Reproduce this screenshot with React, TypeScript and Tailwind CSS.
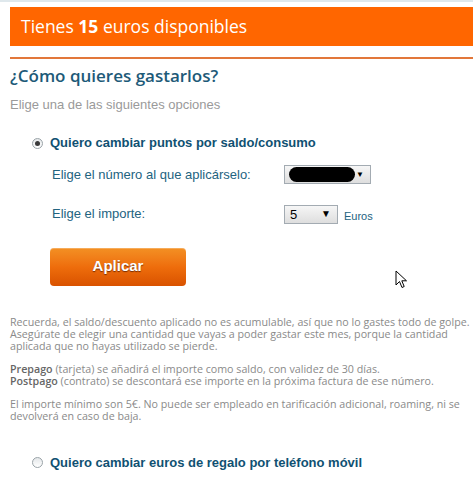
import React from 'react';

function Radio({ checked }: { checked?: boolean }) {
  return (
    <span className="relative inline-flex h-[11px] w-[11px] shrink-0 items-center justify-center rounded-full border border-[#9aa3a8] bg-gradient-to-b from-[#e4e7e9] to-[#ffffff]">
      {checked && <span className="h-[5px] w-[5px] rounded-full bg-[#3a3a3a]" />}
    </span>
  );
}

export default function App() {
  return (
    <div className="min-h-screen w-[473px] overflow-hidden bg-white font-['Liberation_Sans',Arial,sans-serif]">
      <div className="h-[2px] bg-[#dfe8ec]" />

      <div className="pl-[10px]">
        {/* cabecera */}
        <div className="mt-[5px] flex h-[39px] items-center bg-[#ff6600] pl-[11px]">
          <span className="font-['Open_Sans',sans-serif] text-[17.5px] text-white">
            Tienes <b className="font-bold">15</b> euros disponibles
          </span>
        </div>
        <div className="mt-[11px] h-[2px] bg-[#e2773a]" />

        <h1 className="mt-[5px] font-['Open_Sans',sans-serif] text-[17px] font-semibold leading-[24px] text-[#1d5a78]">
          ¿Cómo quieres gastarlos?
        </h1>
        <p className="mt-[9px] text-[13px] leading-[16px] text-[#9a9a9a]">Elige una de las siguientes opciones</p>

        {/* opción 1 */}
        <div className="mt-[22px] flex items-center gap-[7px] pl-[22px]">
          <Radio checked />
          <span className="text-[13px] font-bold leading-[16px] text-[#105172]">Quiero cambiar puntos por saldo/consumo</span>
        </div>

        <div className="mt-[14px] flex items-center pl-[42px]">
          <span className="w-[232px] text-[13px] leading-[16px] text-[#23637f]">Elige el número al que aplicárselo:</span>
          <div className="flex h-[19px] w-[87px] items-center justify-between border border-[#a3abb2] bg-gradient-to-b from-[#f6f6f6] to-[#dedede] pl-[4px] pr-[6px]">
            <span className="h-[15px] w-[66px] rounded-full bg-black" />
            <span className="text-[8px] leading-none text-black">▼</span>
          </div>
        </div>

        <div className="mt-[20px] flex items-center pl-[42px]">
          <span className="w-[232px] text-[13px] leading-[16px] text-[#23637f]">Elige el importe:</span>
          <div className="flex h-[19px] w-[54px] items-center justify-between border border-[#a3abb2] bg-gradient-to-b from-[#f6f6f6] to-[#dedede] pl-[5px] pr-[6px]">
            <span className="text-[13px] text-black">5</span>
            <span className="text-[10px] leading-none text-black">▼</span>
          </div>
          <span className="ml-[6px] mt-[4px] text-[11px] text-[#23637f]">Euros</span>
        </div>

        <div className="relative mt-[23px] pl-[40px]">
          <button className="flex h-[38px] w-[136px] items-center justify-center rounded-[4px] bg-gradient-to-b from-[#f39023] via-[#ee6d0c] to-[#d95200] shadow-[inset_0_1px_0_rgba(255,255,255,0.25)]">
            <span className="text-[15px] font-bold text-white [text-shadow:0_1px_1px_rgba(90,30,0,0.8)]">Aplicar</span>
          </button>
          <svg className="absolute left-[385px] top-[22px]" width="13" height="19" viewBox="0 0 13 19">
            <path d="M1 1 L1 15 L4.5 11.5 L7 17.5 L9.2 16.5 L6.8 10.8 L11.5 10.8 Z" fill="white" stroke="black" strokeWidth="1" strokeLinejoin="round" />
          </svg>
        </div>

        {/* notas */}
        <div className="mt-[30px] space-y-[11px] font-['Open_Sans',sans-serif] text-[10.7px] leading-[12px] text-[#8a8a8a]">
          <p>
            Recuerda, el saldo/descuento aplicado no es acumulable, así que no lo gastes todo de golpe.
            Asegúrate de elegir una cantidad que vayas a poder gastar este mes, porque la cantidad
            aplicada que no hayas utilizado se pierde.
          </p>
          <div>
            <p>
              <b className="font-semibold text-[#666]">Prepago</b> (tarjeta) se añadirá el importe como saldo, con validez de 30 días.
            </p>
            <p>
              <b className="font-semibold text-[#666]">Postpago</b> (contrato) se descontará ese importe en la próxima factura de ese número.
            </p>
          </div>
          <p>
            El importe mínimo son 5€. No puede ser empleado en tarificación adicional, roaming, ni se
            devolverá en caso de baja.
          </p>
        </div>

        {/* opción 2 */}
        <div className="mt-[33px] flex items-center gap-[7px] pl-[22px]">
          <Radio />
          <span className="text-[13px] font-bold leading-[16px] text-[#105172]">Quiero cambiar euros de regalo por teléfono móvil</span>
        </div>
      </div>
    </div>
  );
}
